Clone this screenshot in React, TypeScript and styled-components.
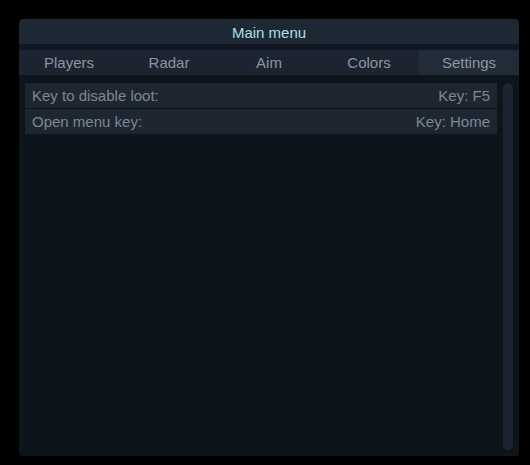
import { useState } from 'react';
import styled, { createGlobalStyle } from 'styled-components';

const GlobalStyle = createGlobalStyle`
  html, body {
    margin: 0;
    padding: 0;
    background: #000;
    font-family: "Liberation Sans", Arial, sans-serif;
  }
`;

const Page = styled.div`
  width: 530px;
  height: 465px;
  padding: 19px 0 0 19px;
  box-sizing: border-box;
`;

const Window = styled.div`
  width: 500px;
  height: 437px;
  display: flex;
  flex-direction: column;
  background: #0e141c;
  border-radius: 4px;
  overflow: hidden;
  box-shadow: 0 0 4px rgba(0, 0, 0, 0.6);
`;

const TitleBar = styled.div`
  height: 25px;
  flex: none;
  display: flex;
  align-items: center;
  justify-content: center;
  padding-top: 2px;
  box-sizing: border-box;
  background: #1e2834;
  color: #a8e0e0;
  font-size: 15px;
  border-radius: 4px 4px 0 0;
`;

const Spacer = styled.div`
  height: 6px;
  flex: none;
  background: #111821;
`;

const Tabs = styled.div`
  height: 25px;
  flex: none;
  display: grid;
  grid-template-columns: repeat(5, 1fr);
  background: #1b2430;
`;

const Tab = styled.button<{ $active?: boolean }>`
  border: none;
  margin: 0;
  padding: 0;
  font: inherit;
  font-size: 15px;
  color: #8c96a1;
  background: ${({ $active }) => ($active ? '#222c39' : 'transparent')};
  cursor: pointer;
`;

const Body = styled.div`
  flex: 1;
  display: flex;
  gap: 6px;
  padding: 8px 6px 6px 6px;
  min-height: 0;
`;

const List = styled.div`
  flex: 1;
  display: flex;
  flex-direction: column;
  gap: 1px;
`;

const Row = styled.div`
  height: 25px;
  display: flex;
  align-items: center;
  justify-content: space-between;
  padding: 0 7px;
  background: #1d2631;
  color: #7f8893;
  font-size: 15px;
`;

const Scrollbar = styled.div`
  width: 10px;
  flex: none;
  background: #1b2430;
  border-radius: 5px;
`;

const tabs = ['Players', 'Radar', 'Aim', 'Colors', 'Settings'];

const settings = [
  { label: 'Key to disable loot:', value: 'Key: F5' },
  { label: 'Open menu key:', value: 'Key: Home' },
];

export default function App() {
  const [active, setActive] = useState('Settings');

  return (
    <>
      <GlobalStyle />
      <Page>
        <Window>
          <TitleBar>Main menu</TitleBar>
          <Spacer />
          <Tabs>
            {tabs.map((t) => (
              <Tab key={t} $active={t === active} onClick={() => setActive(t)}>
                {t}
              </Tab>
            ))}
          </Tabs>
          <Body>
            <List>
              {settings.map((s) => (
                <Row key={s.label}>
                  <span>{s.label}</span>
                  <span>{s.value}</span>
                </Row>
              ))}
            </List>
            <Scrollbar />
          </Body>
        </Window>
      </Page>
    </>
  );
}
